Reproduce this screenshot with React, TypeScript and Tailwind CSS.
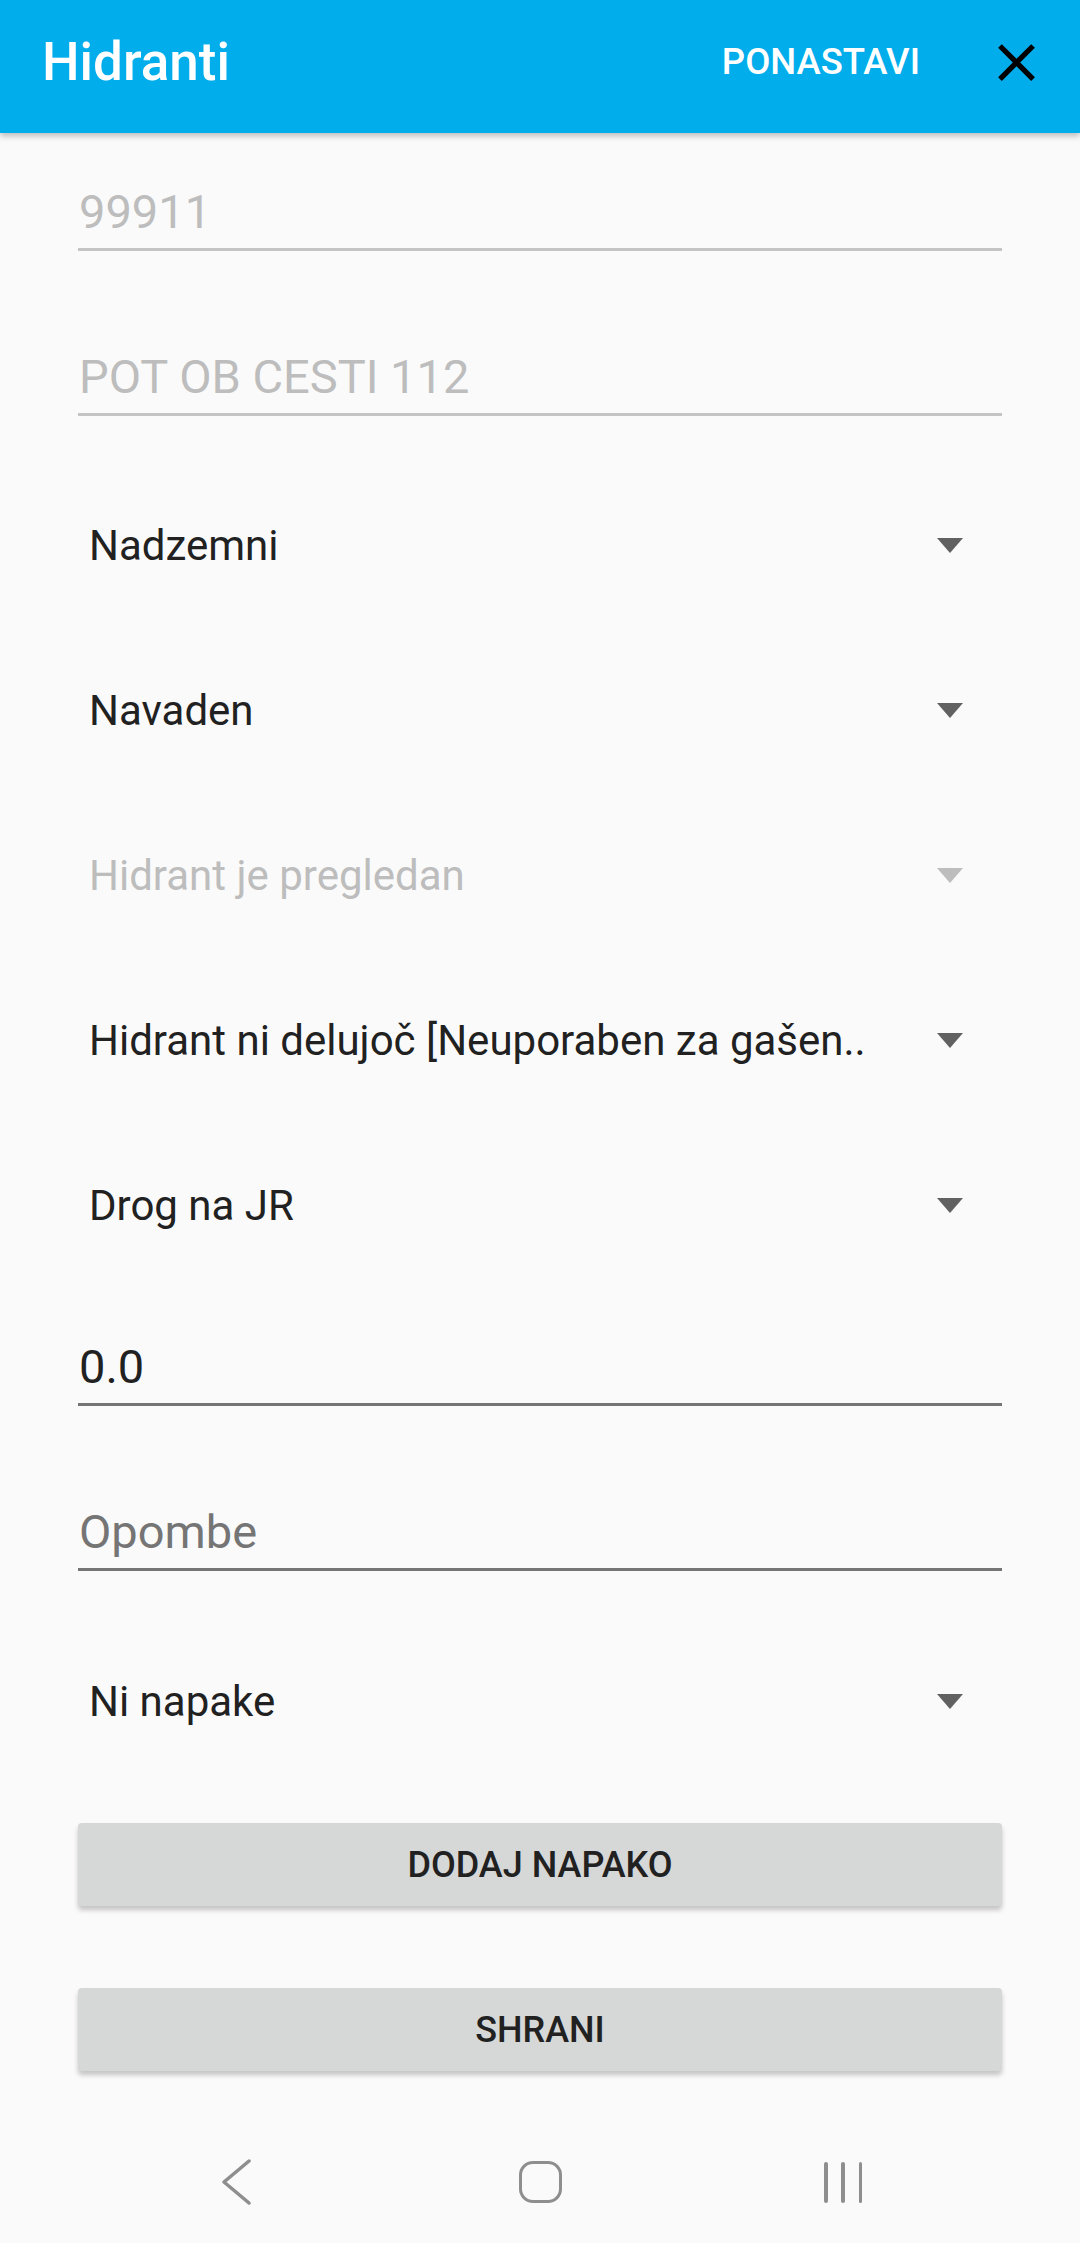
import React from "react";

const font = { fontFamily: "Roboto, 'Noto Sans', sans-serif" };

function TextField({
  text,
  textClass,
  lineClass,
  mt,
}: {
  text: string;
  textClass: string;
  lineClass: string;
  mt: string;
}) {
  return (
    <div className={`mx-[78px] ${mt}`}>
      <div className={`h-[56px] text-[47px] leading-[56px] whitespace-nowrap pl-[1px] ${textClass}`}>{text}</div>
      <div className="h-[8px]" />
      <div className={`h-[3px] ${lineClass}`} />
    </div>
  );
}

function Spinner({ text, disabled, mt }: { text: string; disabled?: boolean; mt?: string }) {
  return (
    <div className={`mx-[78px] h-[165px] flex items-center pl-[11px] pr-[39px] ${mt ?? ""}`}>
      <div
        className={`flex-1 text-[42px] leading-[56px] whitespace-nowrap overflow-hidden ${
          disabled ? "text-[#bdbdbd]" : "text-[#212121]"
        }`}
      >
        {text}
      </div>
      <svg width="26" height="15" viewBox="0 0 26 15" className="shrink-0">
        <polygon points="0,0 26,0 13,15" fill={disabled ? "#bdbdbd" : "#616161"} />
      </svg>
    </div>
  );
}

function Button({ label, mt }: { label: string; mt: string }) {
  return (
    <div
      className={`mx-[78px] ${mt} h-[83px] rounded-[4px] bg-[#d6d7d7] flex items-center justify-center shadow-[0_4px_5px_rgba(0,0,0,0.22)]`}
    >
      <span className="text-[36px] font-medium text-[#212121]">{label}</span>
    </div>
  );
}

export default function App() {
  return (
    <div className="w-[1080px] h-[2243px] bg-[#fafafa] flex flex-col overflow-hidden" style={font}>
      {/* App bar */}
      <div className="h-[133px] shrink-0 bg-[#02adec] flex items-center pl-[42px] pr-[32px] pb-[9px] shadow-[0_3px_6px_rgba(0,0,0,0.25)] relative z-10">
        <div className="text-[53px] font-medium text-white leading-none">Hidranti</div>
        <div className="ml-auto text-[36.5px] font-medium text-white leading-none">PONASTAVI</div>
        <svg width="63" height="63" viewBox="0 0 24 24" className="ml-[65px]">
          <path
            d="M19 6.41L17.59 5 12 10.59 6.41 5 5 6.41 10.59 12 5 17.59 6.41 19 12 13.41 17.59 19 19 17.59 13.41 12z"
            fill="#000"
          />
        </svg>
      </div>

      <TextField text="99911" textClass="text-[#bdbdbd]" lineClass="bg-[#c4c4c4]" mt="mt-[51px]" />
      <TextField text="POT OB CESTI 112" textClass="text-[#bdbdbd]" lineClass="bg-[#c4c4c4]" mt="mt-[98px]" />

      <Spinner text="Nadzemni" mt="mt-[47px]" />
      <Spinner text="Navaden" />
      <Spinner text="Hidrant je pregledan" disabled />
      <Spinner text="Hidrant ni delujoč [Neuporaben za gašen.." />
      <Spinner text="Drog na JR" />

      <TextField text="0.0" textClass="text-[#212121]" lineClass="bg-[#757575]" mt="mt-[51px]" />
      <TextField text="Opombe" textClass="text-[#757575]" lineClass="bg-[#757575]" mt="mt-[98px]" />

      <Spinner text="Ni napake" mt="mt-[48px]" />

      <Button label="DODAJ NAPAKO" mt="mt-[39px]" />
      <Button label="SHRANI" mt="mt-[82px]" />

      {/* Navigation bar */}
      <div className="mt-auto h-[126px] shrink-0 flex items-center justify-center pt-[4px]">
        <div className="w-[303px] flex justify-center">
          <svg width="30" height="46" viewBox="0 0 30 46">
            <polyline
              points="27,2 2,23 27,44"
              fill="none"
              stroke="#8e8e8e"
              strokeWidth="3.5"
              strokeLinecap="round"
              strokeLinejoin="round"
            />
          </svg>
        </div>
        <div className="w-[303px] flex justify-center">
          <div className="w-[43px] h-[42px] rounded-[14px] border-[3.5px] border-[#8e8e8e]" />
        </div>
        <div className="w-[303px] flex justify-center">
          <div className="w-[38px] h-[41px] flex justify-between">
            <div className="w-[3.5px] h-full rounded-full bg-[#8e8e8e]" />
            <div className="w-[3.5px] h-full rounded-full bg-[#8e8e8e]" />
            <div className="w-[3.5px] h-full rounded-full bg-[#8e8e8e]" />
          </div>
        </div>
      </div>
    </div>
  );
}
